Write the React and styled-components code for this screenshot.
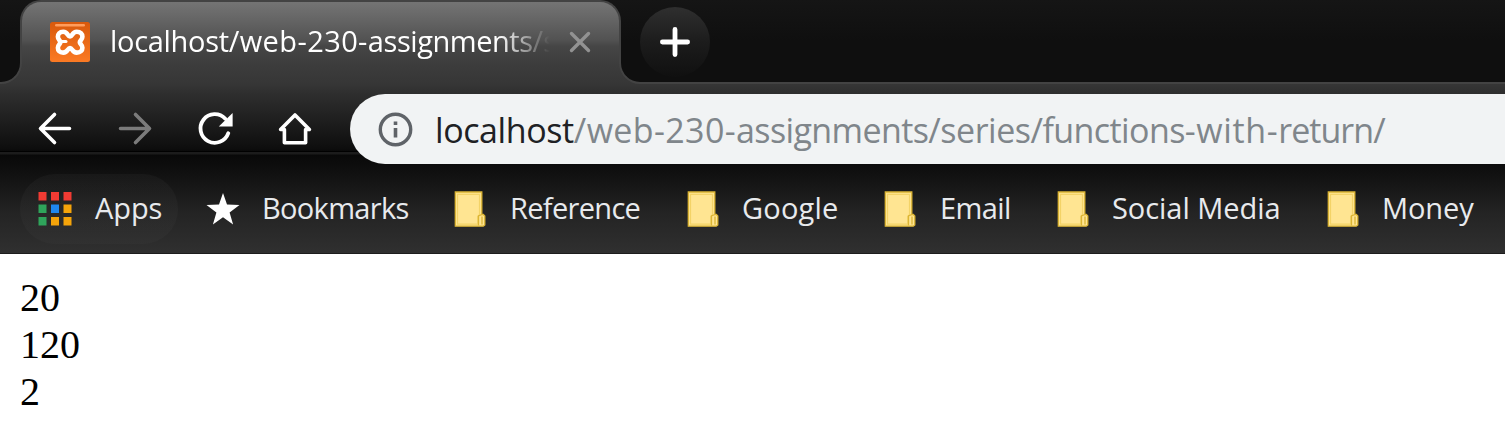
import React from "react";
import styled, { createGlobalStyle } from "styled-components";

const Global = createGlobalStyle`
  * { box-sizing: border-box; }
  html, body { margin: 0; background: #fff; overflow: hidden; }
`;

const uiFont = `"Open Sans", "Noto Sans", sans-serif`;
const frameLine = "#434343";
const stripDark = "linear-gradient(#151515, #0f0f0f)";
const tabFill = "linear-gradient(#767676, #686868 16px, #525252 40px, #464646 46px, #3c3c3c 66px, #363636 84px)";

const Window = styled.div`
  width: 1505px;
  height: 432px;
  overflow: hidden;
  font-family: ${uiFont};
`;

const TabStrip = styled.div`
  display: flex;
  height: 84px;
  background: ${stripDark} 0 0 / 100% 42px no-repeat, ${tabFill};
`;

const StripEdge = styled.div`
  align-self: flex-end;
  width: 22px;
  height: 44px;
  margin-right: -2px;
  border: solid ${frameLine};
  border-width: 0 2px 2px 0;
  border-bottom-right-radius: 21px;
  background: #0f0f0f;
`;

const StripRest = styled.div`
  flex: 1;
  align-self: flex-end;
  height: 44px;
  margin-left: -2px;
  padding-left: 19px;
  border: solid ${frameLine};
  border-width: 0 0 2px 2px;
  border-bottom-left-radius: 21px;
  background: #0f0f0f;
`;

const Tab = styled.div`
  display: flex;
  align-items: center;
  width: 601px;
  height: 64px;
  padding: 18px 24px 0 28px;
  border: 2px solid ${frameLine};
  border-bottom: 0;
  border-radius: 21px 21px 0 0;
  background: ${tabFill} 0 -2px / 100% 84px no-repeat;
`;

const TabTitle = styled.div`
  flex: none;
  width: 444px;
  height: 40px;
  margin: -2px 14px 0 20px;
  overflow: hidden;
  white-space: nowrap;
  color: #fff;
  font-size: 29px;
  line-height: 40px;
  mask-image: linear-gradient(90deg, #000 388px, transparent 440px);
`;

const Run = styled.span`
  letter-spacing: ${(p) => p.$track}px;
`;

const NewTab = styled.div`
  display: grid;
  place-items: center;
  width: 70px;
  height: 70px;
  margin-top: -33px;
  border-radius: 50%;
  background: linear-gradient(#2f2f2f, #1c1c1c 50%, #101010);
`;

const Chrome = styled.div`
  height: 170px;
  border-bottom: 1px solid #1c1c1c;
  background: linear-gradient(
    #363636, #2e2e2e 10px, #0e0e0e 64px, #0a0a0a 67px, #010101 67px, #010101 68px,
    #1c1c1c 68px, #1c1c1c 70px, #090909 71px, #0e0e0e 84px, #242424 130px, #303030 170px
  );
`;

const Toolbar = styled.div`
  display: flex;
  height: 80px;
  padding: 10px 0 0 35px;
`;

const ToolButton = styled.div`
  display: grid;
  place-items: center;
  width: 40px;
  height: 70px;
  margin-right: 40px;
  &:nth-child(4) { margin-right: 35px; }
`;

const AddressBar = styled.div`
  display: flex;
  flex: 1;
  align-items: center;
  height: 70px;
  padding-left: 27px;
  border-radius: 35px 0 0 35px;
  background: #f1f3f4;
`;

const Url = styled.div`
  margin: 1px 0 0 20px;
  white-space: nowrap;
  color: #80868b;
  font-size: 34px;
  line-height: 46px;
`;

const Host = styled(Run)`
  color: #202124;
`;

const Bookmarks = styled.div`
  display: flex;
  height: 90px;
  padding: 10px 0 0 20px;
`;

const Bookmark = styled.div`
  display: flex;
  flex: none;
  align-items: center;
  width: ${(p) => p.$width}px;
  height: 70px;
  padding-left: ${(p) => p.$inset}px;
`;

const AppsButton = styled(Bookmark)`
  border-radius: 35px;
  background: linear-gradient(rgba(60, 60, 60, 0.16), rgba(60, 60, 60, 0.24));
`;

const Label = styled.span`
  margin: -2px 0 0 ${(p) => p.$gap}px;
  white-space: nowrap;
  color: #e8eaed;
  font-size: 29px;
  line-height: 40px;
  letter-spacing: ${(p) => p.$track}px;
`;

const Page = styled.div`
  padding: 20px;
  color: #000;
  font: 40px/47px "Liberation Serif", serif;
`;

const Favicon = () => (
  <svg width="40" height="40" viewBox="0 0 40 40">
    <defs>
      <linearGradient id="fav" x2="0" y2="1">
        <stop offset="0" stopColor="#d8590c" />
        <stop offset="1" stopColor="#fb7a24" />
      </linearGradient>
    </defs>
    <rect width="40" height="40" rx="2.5" fill="url(#fav)" />
    <rect x="5" y="2" width="30" height="2.4" rx="1.2" fill="#ff9d5c" />
    <path
      d="M20 14.500C22.500 14.500 22 9.800 26.800 9.800C30.500 9.800 32.400 12 32.400 14.700C32.400 17.800 29.800 18.400 29.800 20.200C29.800 22 32.400 22.600 32.400 25.700C32.400 28.400 30.500 30.600 26.800 30.600C22 30.600 22.500 26 20 26C17.500 26 18 30.600 13.200 30.600C9.500 30.600 7.900 28.400 7.900 25.700C7.900 22.600 10.400 22 10.400 20.200C10.400 18.400 7.900 17.800 7.900 14.700C7.900 12 9.500 9.800 13.200 9.800C18 9.800 17.500 14.500 20 14.500Z"
      fill="none" stroke="#fff" strokeWidth="4.600" strokeLinejoin="round"
    />
    <path d="M11 19.500h5" stroke="#fff" strokeWidth="3" strokeLinecap="round" />
  </svg>
);

const Stroke = ({ d, color = "#fff", w = 3.6 }) => (
  <svg width="40" height="40" viewBox="0 0 40 40" fill="none" stroke={color} strokeWidth={w} strokeLinecap="round" strokeLinejoin="round">
    <path d={d} />
  </svg>
);

const CloseIcon = () => (
  <svg width="24" height="24" viewBox="0 0 24 24" stroke="#929292" strokeWidth="3.4" strokeLinecap="round">
    <path d="M3.500 3.500l17 17M20.500 3.500l-17 17" />
  </svg>
);

const PlusIcon = () => (
  <svg width="32" height="32" viewBox="0 0 32 32" stroke="#fff" strokeWidth="4.8" strokeLinecap="round">
    <path d="M16 3.400v25.200M3.400 16h25.200" />
  </svg>
);

const ReloadIcon = () => (
  <svg width="40" height="40" viewBox="0 0 40 40">
    <path d="M33.300 24.200A14.300 14.300 0 1 1 30.300 9.800" fill="none" stroke="#fff" strokeWidth="3.800" strokeLinecap="round" />
    <path d="M37.600 4v13.500H23.800z" fill="#fff" />
  </svg>
);

const InfoIcon = () => (
  <svg width="38" height="38" viewBox="0 0 38 38">
    <circle cx="18.500" cy="19.500" r="15.200" fill="none" stroke="#5f6368" strokeWidth="3.400" />
    <path d="M16.700 18h3.600v9.500h-3.600zM16.700 11.500h3.600v3.600h-3.600z" fill="#5f6368" />
  </svg>
);

const red = "#f13b33", green = "#2fa45b", blue = "#1f87ee", amber = "#f5a40a";
const AppsIcon = () => (
  <svg width="34" height="34" viewBox="0 0 34 34">
    {[red, red, red, green, blue, amber, green, amber, amber].map((c, i) => (
      <rect key={i} x={0.5 + (i % 3) * 12.5} y={Math.floor(i / 3) * 12.5} width="8" height="8.500" fill={c} />
    ))}
  </svg>
);

const StarIcon = () => (
  <svg width="34" height="34" viewBox="0 0 34 34">
    <path d="M17 1l4 11.600 12.500.3-9.900 7.700 3.500 11.900L17 25.300 6.900 32.500l3.500-11.900L.5 12.900 13 12.600z" fill="#fff" />
  </svg>
);

const FolderIcon = () => (
  <svg width="32" height="36" viewBox="0 0 32 36">
    <path d="M1.300 1h26.500v22.500h1.500l1.500 1.500v9l-1.500 1.200h-28z" fill="#ffe592" stroke="#dcb534" strokeWidth="1.300" />
    <path d="M3.500 3.300h22v20.500l-1.800 1.700v7.700H3.500z" fill="none" stroke="#f3d367" strokeWidth="1.200" />
    <path d="M27.800 23.500l-3.300 1.500v9.500M28 25.500v8" fill="none" stroke="#dcb534" strokeWidth="1.300" />
  </svg>
);

const folders = [
  { name: "Reference", width: 233, track: -0.68, gap: 24 },
  { name: "Google", width: 197, track: 0.2, gap: 23 },
  { name: "Email", width: 173, track: -0.62, gap: 24 },
  { name: "Social Media", width: 270, track: -0.05, gap: 23 },
  { name: "Money", width: 178, track: -0.1, gap: 23 },
];

export default function App() {
  return (
    <Window>
      <Global />
      <TabStrip>
        <StripEdge />
        <Tab>
          <Favicon />
          <TabTitle>
            <Run $track={-0.31}>localhost</Run>
            <Run $track={0.4}>/web-230-</Run>
            <Run $track={-0.45}>assignments</Run>
            <Run $track={0}>/s</Run>
          </TabTitle>
          <CloseIcon />
        </Tab>
        <StripRest>
          <NewTab><PlusIcon /></NewTab>
        </StripRest>
      </TabStrip>
      <Chrome>
        <Toolbar>
          <ToolButton><Stroke d="M34.500 19.500H6M19.500 5.500L5.500 19.500l14 14" /></ToolButton>
          <ToolButton><Stroke color="#7b7b7b" d="M5.500 19.500H34M20.500 5.500l14 14-14 14" /></ToolButton>
          <ToolButton><ReloadIcon /></ToolButton>
          <ToolButton><Stroke d="M5.600 20.500L20 6l14.400 14.500h-3.800v13.200H9.400V20.500z" /></ToolButton>
          <AddressBar>
            <InfoIcon />
            <Url>
              <Host $track={-0.4}>localhost</Host>
              <Run $track={0.36}>/web-230-</Run>
              <Run $track={-0.6}>assignments</Run>
              <Run $track={-0.48}>/series/</Run>
              <Run $track={-0.6}>functions</Run>
              <Run $track={0.61}>-with-</Run>
              <Run $track={-0.95}>return</Run>
              <Run $track={0}>/</Run>
            </Url>
          </AddressBar>
        </Toolbar>
        <Bookmarks>
          <AppsButton $width={158} $inset={18}>
            <AppsIcon />
            <Label $gap={23} $track={-0.1}>Apps</Label>
          </AppsButton>
          <Bookmark $width={276} $inset={28}>
            <StarIcon />
            <Label $gap={22} $track={-0.68}>Bookmarks</Label>
          </Bookmark>
          {folders.map((f) => (
            <Bookmark key={f.name} $width={f.width} $inset={0}>
              <FolderIcon />
              <Label $gap={f.gap} $track={f.track}>{f.name}</Label>
            </Bookmark>
          ))}
        </Bookmarks>
      </Chrome>
      <Page>
        <div>20</div>
        <div>120</div>
        <div>2</div>
      </Page>
    </Window>
  );
}
